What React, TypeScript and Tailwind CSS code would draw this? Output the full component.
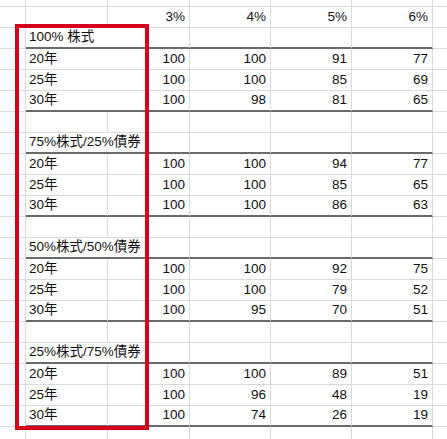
import React from "react";

type RowKind = "top" | "header" | "label" | "data" | "lastdata" | "empty" | "bottom";

interface RowDef {
  kind: RowKind;
  cells: (string | number)[]; // for columns B..F
  hideBC?: boolean;
}

const groups: { label: string; rows: (string | number)[][] }[] = [
  {
    label: "100% 株式",
    rows: [
      ["20年", "", 100, 100, 91, 77],
      ["25年", "", 100, 100, 85, 69],
      ["30年", "", 100, 98, 81, 65],
    ],
  },
  {
    label: "75%株式/25%債券",
    rows: [
      ["20年", "", 100, 100, 94, 77],
      ["25年", "", 100, 100, 85, 65],
      ["30年", "", 100, 100, 86, 63],
    ],
  },
  {
    label: "50%株式/50%債券",
    rows: [
      ["20年", "", 100, 100, 92, 75],
      ["25年", "", 100, 100, 79, 52],
      ["30年", "", 100, 95, 70, 51],
    ],
  },
  {
    label: "25%株式/75%債券",
    rows: [
      ["20年", "", 100, 100, 89, 51],
      ["25年", "", 100, 96, 48, 19],
      ["30年", "", 100, 74, 26, 19],
    ],
  },
];

function buildRows(): RowDef[] {
  const rows: RowDef[] = [];
  rows.push({ kind: "top", cells: ["", "", "", "", ""] });
  rows.push({ kind: "header", cells: ["", "3%", "4%", "5%", "6%"] });
  groups.forEach((g, gi) => {
    if (gi > 0) rows.push({ kind: "empty", cells: ["", "", "", "", ""] });
    rows.push({ kind: "label", cells: [g.label, "", "", "", ""] });
    g.rows.forEach((r, ri) => {
      rows.push({
        kind: ri === 2 ? "lastdata" : "data",
        cells: [r[0], r[2], r[3], r[4], r[5]],
        hideBC: gi === 0,
      });
    });
  });
  rows.push({ kind: "bottom", cells: ["", "", "", "", ""] });
  rows.push({ kind: "bottom", cells: ["", "", "", "", ""] });
  return rows;
}

function Row({ row }: { row: RowDef }) {
  const h = row.kind === "top" ? "h-[7px]" : "h-[21px]";
  const dark = row.kind === "label" || row.kind === "lastdata";
  const midBottom = dark
    ? "border-b-2 border-b-[#6a6a6a]"
    : "border-b border-b-[#dadada]";
  const lightBottom = "border-b border-b-[#dadada]";

  return (
    <>
      <div className={`${h} ${lightBottom} border-r border-r-[#dadada]`} />
      <div
        className={`${h} ${midBottom} ${
          row.kind === "label" || row.hideBC ? "" : "border-r border-r-[#dadada]"
        } relative whitespace-nowrap`}
      >
        {row.cells[0] !== "" && (
          <span className="absolute left-[3px] bottom-[2px] text-[13.5px] leading-[16px] text-[#111111]">
            {row.cells[0]}
          </span>
        )}
      </div>
      {[1, 2, 3, 4].map((i) => (
        <div
          key={i}
          className={`${h} ${midBottom} border-r border-r-[#dadada] flex items-end justify-end pr-[4px] pb-[2px]`}
        >
          <span className="text-[13.5px] leading-[16px] text-[#111111]">
            {row.cells[i]}
          </span>
        </div>
      ))}
      <div className={`${h} ${lightBottom}`} />
    </>
  );
}

export default function App() {
  const rows = buildRows();
  return (
    <div
      className="relative w-[447px] h-[439px] overflow-hidden bg-white"
      style={{ fontFamily: '"Liberation Sans", "Noto Sans CJK JP", sans-serif' }}
    >
      <div className="grid grid-cols-[26px_82px_82px_81px_81px_81px_1fr]">
        {rows.map((r, i) => (
          <Row key={i} row={r} />
        ))}
      </div>
      <div className="absolute left-[15px] top-[24px] w-[134px] h-[406px] border-[4px] border-[#d6001c] pointer-events-none" />
    </div>
  );
}
